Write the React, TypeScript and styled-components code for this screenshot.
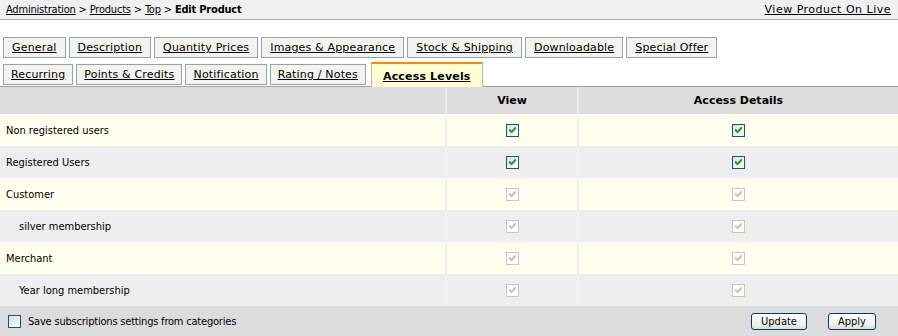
import React from 'react';
import styled, { createGlobalStyle, css } from 'styled-components';

const GlobalStyle = createGlobalStyle`
  html, body { margin: 0; padding: 0; background: #ffffff; }
  body {
    width: 898px;
    height: 336px;
    overflow: hidden;
    font-family: "DejaVu Sans Condensed", "DejaVu Sans", sans-serif;
    font-size: 11px;
    color: #000;
  }
`;

const TopBar = styled.div`
  display: flex;
  justify-content: space-between;
  align-items: center;
  height: 19px;
  padding: 0 7px 0 6px;
  background: #f0f0f0;
  border-bottom: 1px solid #a8a8a8;
`;

const Crumbs = styled.div`
  display: flex;
  gap: 3px;
  align-items: center;
  letter-spacing: -0.2px;
`;

const Link = styled.a<{ $wide?: boolean }>`
  color: #000;
  text-decoration: underline;
  cursor: pointer;
  ${p => (p.$wide ? 'font-family: "DejaVu Sans", Verdana, sans-serif; letter-spacing: 0.5px;' : '')}
`;

const Current = styled.b`
  font-weight: bold;
`;

const TabsArea = styled.div`
  padding: 17px 0 0 3px;
`;

const TabRow = styled.div<{ $last?: boolean }>`
  display: flex;
  align-items: flex-start;
  gap: 3px;
  height: ${p => (p.$last ? '25px' : '21px')};
  margin-top: ${p => (p.$last ? '4px' : '0')};
  margin-bottom: ${p => (p.$last ? '-1px' : '0')};
  position: relative;
  z-index: 1;
`;

const Tab = styled.div<{ $active?: boolean }>`
  box-sizing: border-box;
  height: 21px;
  padding: 0 8px;
  display: flex;
  align-items: center;
  font-family: "DejaVu Sans", Verdana, sans-serif;
  font-size: 11px;
  letter-spacing: 0.17px;
  text-decoration: underline;
  background: #f4f3ee;
  border: 1px solid #8ea3b3;
  white-space: nowrap;
  ${p =>
    p.$active &&
    css`
      height: 25px;
      margin-left: 2px;
      padding: 2px 11px 0;
      background: #ffffd6;
      border: 1px solid #b9b9a4;
      border-top: 2px solid #ff8a00;
      border-bottom: none;
      font-weight: bold;
    `}
`;

const RowTwoTab = styled(Tab)`
  margin-top: 2px;
  padding: 0 7px;
`;

const Grid = styled.div`
  display: grid;
  grid-template-columns: 445px 132px 1fr;
  border-top: 1px solid #a0a0a0;
`;

const Cell = styled.div<{ $bg: string; $center?: boolean; $indent?: boolean; $sep?: boolean }>`
  height: 32px;
  display: flex;
  align-items: center;
  justify-content: ${p => (p.$center ? 'center' : 'flex-start')};
  padding-left: ${p => (p.$center ? '0' : p.$indent ? '19px' : '6px')};
  background: ${p => p.$bg};
  border-left: ${p => (p.$sep ? '2px solid #f0f0f0' : 'none')};
`;

const HeadCell = styled(Cell)`
  height: 27px;
  font-family: "DejaVu Sans", Verdana, sans-serif;
  font-weight: bold;
  border-left: ${p => (p.$sep ? '2px solid #ececec' : 'none')};
`;

const Box = styled.span<{ $disabled?: boolean }>`
  box-sizing: border-box;
  width: 13px;
  height: 13px;
  display: inline-flex;
  align-items: center;
  justify-content: center;
  border: 1px solid ${p => (p.$disabled ? '#cac8bb' : '#1c5180')};
  background: ${p => (p.$disabled ? '#ffffff' : 'linear-gradient(135deg, #dcdcd7, #ffffff)')};
`;

const Footer = styled.div`
  height: 30px;
  display: flex;
  align-items: center;
  padding: 0 22px 0 8px;
  background: #dcdcdc;
`;

const SaveLabel = styled.label`
  display: flex;
  align-items: center;
  gap: 7px;
  flex: 1;
  letter-spacing: -0.2px;
`;

const Button = styled.button<{ $w: number }>`
  box-sizing: border-box;
  width: ${p => p.$w}px;
  height: 17px;
  padding: 0;
  margin-left: 21px;
  font-family: "DejaVu Sans Condensed", "DejaVu Sans", sans-serif;
  font-size: 11px;
  color: #000;
  border: 1px solid #003c74;
  border-radius: 3px;
  background: linear-gradient(#ffffff, #f0f0ea 70%, #dcdad0);
`;

const Check: React.FC<{ on?: boolean; disabled?: boolean }> = ({ on = true, disabled }) => (
  <Box $disabled={disabled}>
    {on && (
      <svg width="7" height="7" viewBox="0 0 7 7">
        <path d="M0 2 L0 4 L2 6 L3 6 L7 2 L7 0 L6 0 L2.5 3.5 L1 2 Z" fill={disabled ? '#c6c3b3' : '#21a121'} />
      </svg>
    )}
  </Box>
);

const rows = [
  { name: 'Non registered users', indent: false, disabled: false },
  { name: 'Registered Users', indent: false, disabled: false },
  { name: 'Customer', indent: false, disabled: true },
  { name: 'silver membership', indent: true, disabled: true },
  { name: 'Merchant', indent: false, disabled: true },
  { name: 'Year long membership', indent: true, disabled: true },
];

const tabsOne = ['General', 'Description', 'Quantity Prices', 'Images & Appearance', 'Stock & Shipping', 'Downloadable', 'Special Offer'];
const tabsTwo = ['Recurring', 'Points & Credits', 'Notification', 'Rating / Notes'];

export default function App() {
  return (
    <>
      <GlobalStyle />
      <TopBar>
        <Crumbs>
          <Link>Administration</Link> &gt; <Link>Products</Link> &gt; <Link>Top</Link> &gt; <Current>Edit Product</Current>
        </Crumbs>
        <Link $wide>View Product On Live</Link>
      </TopBar>
      <TabsArea>
        <TabRow>
          {tabsOne.map(t => (
            <Tab key={t}>{t}</Tab>
          ))}
        </TabRow>
        <TabRow $last>
          {tabsTwo.map(t => (
            <RowTwoTab key={t}>{t}</RowTwoTab>
          ))}
          <Tab $active>Access Levels</Tab>
        </TabRow>
      </TabsArea>
      <Grid>
        <HeadCell $bg="#dddddd" />
        <HeadCell $bg="#dddddd" $center $sep>View</HeadCell>
        <HeadCell $bg="#dddddd" $center $sep>Access Details</HeadCell>
        {rows.map((r, i) => {
          const bg = i % 2 === 0 ? '#fffff0' : '#eeeeee';
          return (
            <React.Fragment key={r.name}>
              <Cell $bg={bg} $indent={r.indent}>{r.name}</Cell>
              <Cell $bg={bg} $center $sep><Check disabled={r.disabled} /></Cell>
              <Cell $bg={bg} $center $sep><Check disabled={r.disabled} /></Cell>
            </React.Fragment>
          );
        })}
      </Grid>
      <Footer>
        <SaveLabel>
          <Check on={false} />
          Save subscriptions settings from categories
        </SaveLabel>
        <Button $w={56}>Update</Button>
        <Button $w={48}>Apply</Button>
      </Footer>
    </>
  );
}
